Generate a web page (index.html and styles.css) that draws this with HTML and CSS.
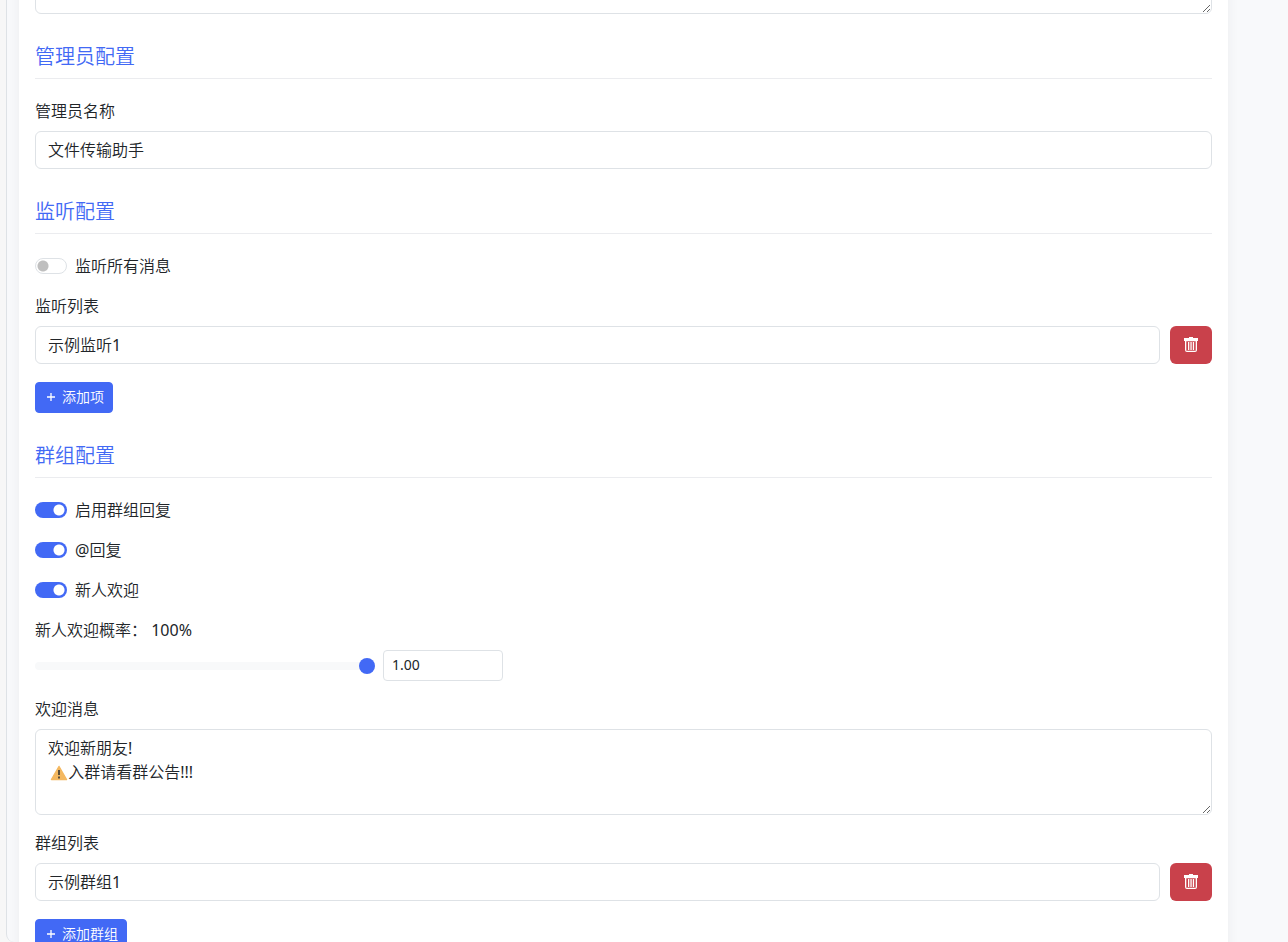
FILE: index.html
```
<!DOCTYPE html>
<html lang="zh-CN">
<head>
  <meta charset="UTF-8">
  <meta name="viewport" content="width=device-width, initial-scale=1.0">
  <title>配置</title>
  <link rel="stylesheet" href="styles.css">
</head>
<body>
  <main class="pane">
    <form class="card">
      <textarea class="form-control prompt" rows="3" aria-label="提示词"></textarea>

      <section class="config-section">
        <h5 class="section-title">管理员配置</h5>
        <div class="field">
          <label class="form-label" for="admin-name">管理员名称</label>
          <input type="text" id="admin-name" class="form-control" value="文件传输助手">
        </div>
      </section>

      <section class="config-section">
        <h5 class="section-title">监听配置</h5>
        <div class="switch">
          <input type="checkbox" id="listen-all">
          <label for="listen-all">监听所有消息</label>
        </div>
        <div class="field">
          <label class="form-label" for="listen-1">监听列表</label>
          <div class="list-item">
            <input type="text" id="listen-1" class="form-control" value="示例监听1">
            <button type="button" class="btn-delete" aria-label="删除">
              <svg width="16" height="16" viewBox="0 0 16 16"><path fill="#fff" fill-rule="evenodd" d="M6 0h4v1h5v3h-1v9a2 2 0 0 1-2 2H4a2 2 0 0 1-2-2V4H1V1H6zM3.300 4.300V13.700H12.700V4.300zM5 5h1.300V13H5zM7.400 5h1.300V13H7.400zM9.800 5h1.300V13H9.800z"/></svg>
            </button>
          </div>
        </div>
        <button type="button" class="btn-add">
          <svg width="14" height="14" viewBox="0 0 14 14"><path d="M7 3v8M3 7h8" stroke="#fff" stroke-width="1.300"/></svg>
          添加项
        </button>
      </section>

      <section class="config-section">
        <h5 class="section-title">群组配置</h5>
        <div class="switch">
          <input type="checkbox" id="group-reply" checked>
          <label for="group-reply">启用群组回复</label>
        </div>
        <div class="switch">
          <input type="checkbox" id="at-reply" checked>
          <label for="at-reply">@回复</label>
        </div>
        <div class="switch">
          <input type="checkbox" id="welcome" checked>
          <label for="welcome">新人欢迎</label>
        </div>
        <div class="field">
          <label class="form-label" for="welcome-rate">新人欢迎概率： <span id="rate-text">100%</span></label>
          <div class="slider-row">
            <input type="range" id="welcome-rate" class="slider" min="0" max="1" step="0.01" value="1">
            <input type="text" id="rate-value" class="form-control small" value="1.00" aria-label="概率">
          </div>
        </div>
        <div class="field">
          <label class="form-label" for="welcome-msg">欢迎消息</label>
          <div class="message-box">
            <textarea id="welcome-msg" class="form-control" rows="3">欢迎新朋友!
　 入群请看群公告!!!</textarea>
            <svg class="warning" width="18" height="16" viewBox="0 0 18 16">
              <path d="M9 1.500L16.500 14.500H1.500z" fill="#f4b860" stroke="#f4b860" stroke-width="1.500" stroke-linejoin="round"/>
              <path d="M9 5v5M9 11.500v2" stroke="#4d4436" stroke-width="1.800"/>
            </svg>
          </div>
        </div>
        <div class="field">
          <label class="form-label" for="group-1">群组列表</label>
          <div class="list-item">
            <input type="text" id="group-1" class="form-control" value="示例群组1">
            <button type="button" class="btn-delete" aria-label="删除">
              <svg width="16" height="16" viewBox="0 0 16 16"><path fill="#fff" fill-rule="evenodd" d="M6 0h4v1h5v3h-1v9a2 2 0 0 1-2 2H4a2 2 0 0 1-2-2V4H1V1H6zM3.300 4.300V13.700H12.700V4.300zM5 5h1.300V13H5zM7.400 5h1.300V13H7.400zM9.800 5h1.300V13H9.800z"/></svg>
            </button>
          </div>
        </div>
        <button type="button" class="btn-add">
          <svg width="14" height="14" viewBox="0 0 14 14"><path d="M7 3v8M3 7h8" stroke="#fff" stroke-width="1.300"/></svg>
          添加群组
        </button>
      </section>
    </form>
  </main>
  <script>
    const slider = document.getElementById('welcome-rate');
    slider.addEventListener('input', () => {
      document.getElementById('rate-text').textContent = Math.round(slider.value * 100) + '%';
      document.getElementById('rate-value').value = Number(slider.value).toFixed(2);
    });
  </script>
</body>
</html>
```
FILE: styles.css
```
* { margin: 0; padding: 0; box-sizing: border-box; }
body {
  font-family: "Noto Sans", "Noto Sans CJK SC DemiLight", "Noto Sans CJK SC", sans-serif;
  font-size: 16px;
  line-height: 24px;
  color: #212529;
  background: #f7f7f7;
  height: 100vh;
  overflow: hidden;
}
input, textarea, button { font: inherit; color: inherit; }

.pane {
  height: 100vh;
  margin-left: 6px;
  padding: 0 60px 0 12px;
  background: #f8f9fb;
  border-left: 1px solid #dee2e6;
  border-bottom-left-radius: 8px;
  overflow: hidden;
}
.card {
  padding: 0 16px;
  background: #fff;
  box-shadow: 0 0 12px rgba(58, 59, 69, 0.06);
}

/* Sections */
.config-section { padding-bottom: 30px; }
.section-title {
  font-size: 20px;
  font-weight: 350;
  line-height: 26px;
  color: #4269f5;
  padding-bottom: 8px;
  margin-bottom: 20px;
  border-bottom: 1px solid #ebecef;
}
.field + .field, .switch + .field { margin-top: 16px; }
.switch + .switch { margin-top: 16px; }
.form-label {
  display: block;
  margin-bottom: 8px;
}

/* Inputs */
.form-control {
  display: block;
  width: 100%;
  padding: 6px 12px;
  background: #fff;
  border: 1px solid #dee2e6;
  border-radius: 6px;
  outline: none;
}
.form-control:focus { border-color: #4269f5; }
input.form-control {
  height: 38px;
  padding: 5px 12px 7px;
}
textarea.form-control {
  height: 86px;
  resize: vertical;
}
/* scrolled mostly out of view */
.form-control.prompt {
  margin-top: -72px;
  margin-bottom: 30px;
}
input.form-control.small {
  width: 120px;
  height: 31px;
  padding: 3px 8px 5px;
  font-size: 14px;
  line-height: 21px;
  border-radius: 4px;
}

/* Switches */
.switch {
  display: flex;
  align-items: center;
  gap: 8px;
}
.switch input {
  appearance: none;
  width: 32px;
  height: 16px;
  background: radial-gradient(circle at 8px 50%, #bfbfbf 5px, transparent 6px) border-box #fff;
  border: 1px solid #dee2e6;
  border-radius: 8px;
  cursor: pointer;
}
.switch input:checked {
  background: radial-gradient(circle at 24px 50%, #fff 5px, transparent 6px) border-box #4269f5;
  border-color: transparent;
}

/* Lists */
.list-item {
  display: flex;
  gap: 10px;
  margin-bottom: 18px;
}
.list-item .form-control { flex: 1; }
.btn-delete {
  display: flex;
  align-items: center;
  justify-content: center;
  width: 42px;
  background: #c9414b;
  border: none;
  border-radius: 6px;
  cursor: pointer;
}
.btn-add {
  display: flex;
  align-items: center;
  gap: 4px;
  padding: 3px 8px 5px;
  font-size: 14px;
  line-height: 21px;
  color: #fff;
  background: #4269f5;
  border: 1px solid #4269f5;
  border-radius: 4px;
  cursor: pointer;
}

/* Slider */
.slider-row {
  display: flex;
  align-items: center;
  gap: 8px;
}
.slider {
  appearance: none;
  width: 340px;
  height: 16px;
  background: transparent;
}
.slider::-webkit-slider-runnable-track {
  height: 8px;
  background: #f8f9fa;
  border-radius: 4px;
}
.slider::-webkit-slider-thumb {
  appearance: none;
  width: 16px;
  height: 16px;
  margin-top: -4px;
  background: #4269f5;
  border-radius: 50%;
}

/* Welcome message */
.message-box { position: relative; }
.warning {
  position: absolute;
  top: 36px;
  left: 15px;
}
```
